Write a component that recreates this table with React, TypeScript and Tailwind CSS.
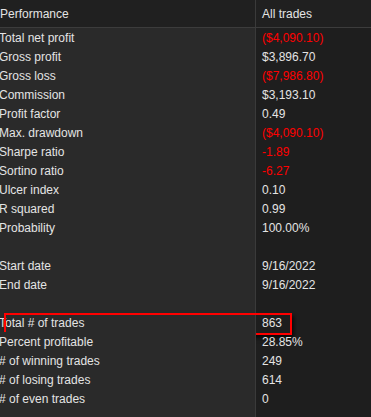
const ROWS: { label: string; value: string; neg?: boolean }[] = [
  { label: 'Total net profit', value: '($4,090.10)', neg: true },
  { label: 'Gross profit', value: '$3,896.70' },
  { label: 'Gross loss', value: '($7,986.80)', neg: true },
  { label: 'Commission', value: '$3,193.10' },
  { label: 'Profit factor', value: '0.49' },
  { label: 'Max. drawdown', value: '($4,090.10)', neg: true },
  { label: 'Sharpe ratio', value: '-1.89', neg: true },
  { label: 'Sortino ratio', value: '-6.27', neg: true },
  { label: 'Ulcer index', value: '0.10' },
  { label: 'R squared', value: '0.99' },
  { label: 'Probability', value: '100.00%' },
  { label: '', value: '' },
  { label: 'Start date', value: '9/16/2022' },
  { label: 'End date', value: '9/16/2022' },
  { label: '', value: '' },
  { label: 'Total # of trades', value: '863' },
  { label: 'Percent profitable', value: '28.85%' },
  { label: '# of winning trades', value: '249' },
  { label: '# of losing trades', value: '614' },
  { label: '# of even trades', value: '0' },
  { label: '', value: '' },
];

function App() {
  return (
    <div
      className="h-[417px] w-[371px] overflow-hidden bg-[#1e1e1e] text-[12px] text-[#e4e4e4]"
      style={{ fontFamily: '"Liberation Sans", Arial, sans-serif' }}
    >
      <div className="flex h-[28px] border-b border-[#3c3c3c] bg-[#202020]">
        <div className="flex w-[256px] items-center border-r border-[#3a3a3a] pl-0">Performance</div>
        <div className="flex flex-1 items-center pl-[6px]">All trades</div>
      </div>
      <div className="flex flex-col">
        {ROWS.map((row, i) => (
          <div key={i} className="relative flex h-[19px]">
            <div className="flex w-[256px] items-center border-r border-[#3a3a3a] bg-[#2a2a2a] -indent-px">
              {row.label}
            </div>
            <div className={`flex flex-1 items-center pl-[6px] ${row.neg ? 'text-[#ff0000]' : ''}`}>
              {row.value}
            </div>
            {row.label === 'Total # of trades' && (
              <div className="pointer-events-none absolute left-[4px] top-0 h-[22px] w-[288px] border-2 border-[#ff0000] shadow-[2px_3px_4px_rgba(0,0,0,0.7)]" />
            )}
          </div>
        ))}
      </div>
    </div>
  );
}

export default App;
